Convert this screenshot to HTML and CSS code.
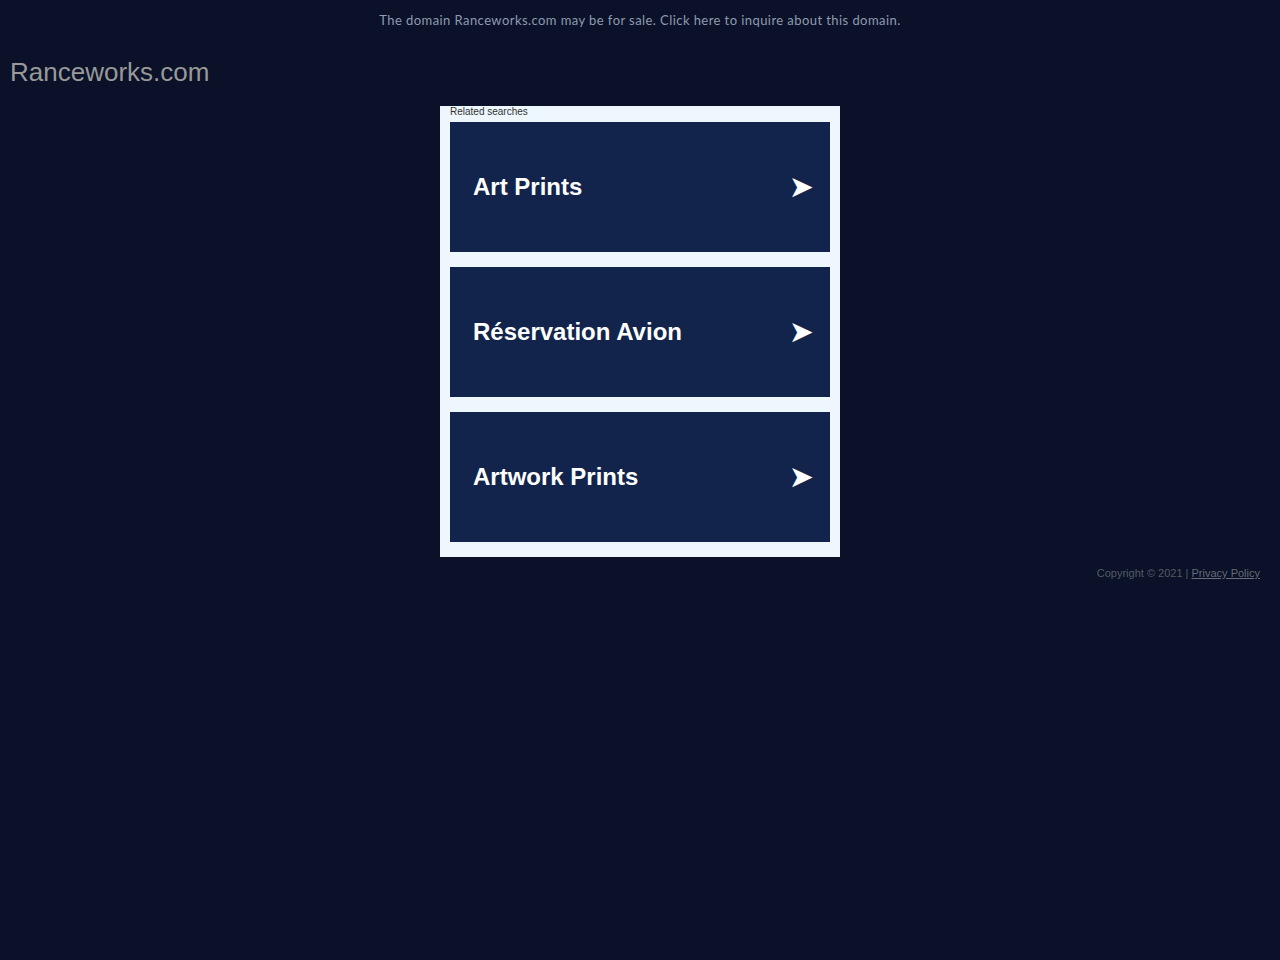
FILE: index.html
```html
<!DOCTYPE html>
<html>
<head>
<meta charset="utf-8">
<link rel="stylesheet" href="styles.css">
</head>
<body>
<div class="topbar">The domain Ranceworks.com may be for sale. Click here to inquire about this domain.</div>
<h1 class="domain">Ranceworks.com</h1>
<div class="box">
  <div class="related">Related searches</div>
  <div class="list">
    <a class="card"><span>Art Prints</span><span class="arrow">&#10148;</span></a>
    <a class="card"><span>Réservation Avion</span><span class="arrow">&#10148;</span></a>
    <a class="card"><span>Artwork Prints</span><span class="arrow">&#10148;</span></a>
  </div>
</div>
<div class="footer">Copyright © 2021 | <a class="privacy">Privacy Policy</a></div>
</body>
</html>
```
FILE: styles.css
```css
html, body {
  margin: 0;
  padding: 0;
  background: #0a1128;
}
body {
  font-family: "Liberation Sans", Arial, sans-serif;
}
.topbar {
  text-align: center;
  font-family: "Lato", "Open Sans", sans-serif;
  font-weight: 400;
  font-size: 13px;
  letter-spacing: 0.43px;
  color: #8e9bb0;
  padding-top: 12px;
  height: 20px;
  line-height: 16px;
}
.domain {
  margin: 0;
  padding: 24px 10px 0 10px;
  font-weight: normal;
  font-size: 26px;
  line-height: 32px;
  color: #999999;
  height: 32px;
}
.box {
  width: 380px;
  margin: 18px auto 0 auto;
  background: #eef7fd;
  padding: 0 10px 15px 10px;
}
.related {
  font-size: 10px;
  color: #333;
  line-height: 12px;
  height: 16px;
}
.list {
  display: flex;
  flex-direction: column;
  gap: 15px;
}
.card {
  height: 130px;
  background: #12244b;
  color: #ffffff;
  display: flex;
  align-items: center;
  justify-content: space-between;
  padding: 0 16px 0 23px;
  font-size: 24px;
  font-weight: bold;
}
.arrow {
  font-family: "DejaVu Sans", sans-serif;
  font-size: 30px;
  font-weight: normal;
  line-height: 30px;
}
.footer {
  text-align: right;
  padding: 10px 20px 0 0;
  font-size: 11px;
  color: #555b66;
}
.privacy {
  color: #666b75;
  text-decoration: underline;
}
```
